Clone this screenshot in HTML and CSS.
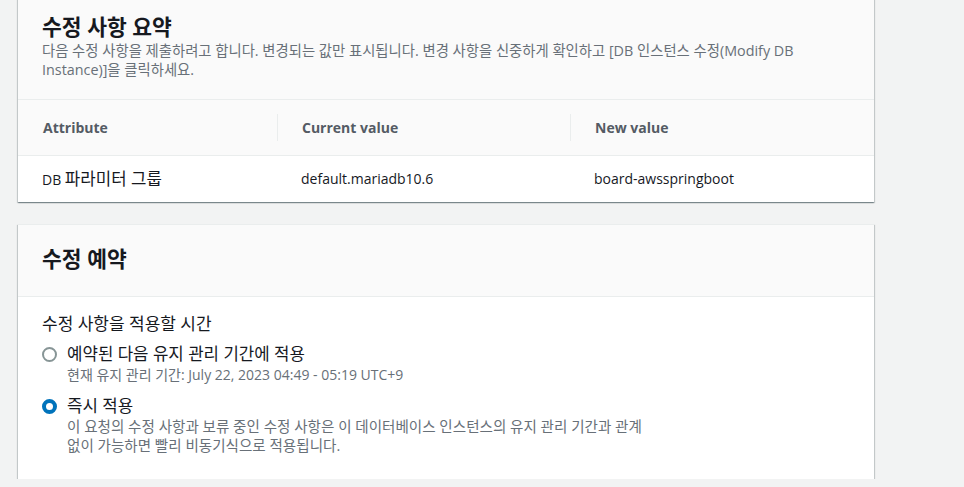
FILE: index.html
```html
<!DOCTYPE html>
<html lang="ko">
<head>
<meta charset="utf-8">
<link rel="stylesheet" href="styles.css">
</head>
<body>
<div class="page">
  <section class="card card-summary">
    <header class="card-header">
      <h2 class="card-title">수정 사항 요약</h2>
      <p class="card-desc">다음 수정 사항을 제출하려고 합니다. 변경되는 값만 표시됩니다. 변경 사항을 신중하게 확인하고 [DB 인스턴스 수정(Modify DB Instance)]을 클릭하세요.</p>
    </header>
    <div class="table">
      <div class="th"><div class="th-inner first">Attribute</div></div>
      <div class="th"><div class="th-inner">Current value</div></div>
      <div class="th"><div class="th-inner">New value</div></div>
      <div class="td">DB <span class="ko">파라미터 그룹</span></div>
      <div class="td">default.mariadb10.6</div>
      <div class="td">board-awsspringboot</div>
    </div>
  </section>

  <section class="card card-schedule">
    <header class="card-header schedule-header">
      <h2 class="card-title">수정 예약</h2>
    </header>
    <div class="card-body">
      <div class="field-label">수정 사항을 적용할 시간</div>
      <div class="radio-group">
        <label class="radio-option">
          <span class="radio"></span>
          <span class="radio-text">
            <span class="radio-label">예약된 다음 유지 관리 기간에 적용</span>
            <span class="radio-desc">현재 유지 관리 기간: July 22, 2023 04:49 - 05:19 UTC+9</span>
          </span>
        </label>
        <label class="radio-option">
          <span class="radio checked"></span>
          <span class="radio-text">
            <span class="radio-label">즉시 적용</span>
            <span class="radio-desc wrap">이 요청의 수정 사항과 보류 중인 수정 사항은 이 데이터베이스 인스턴스의 유지 관리 기간과 관계 없이 가능하면 빨리 비동기식으로 적용됩니다.</span>
          </span>
        </label>
      </div>
    </div>
  </section>
</div>
</body>
</html>
```

FILE: styles.css
```css
html, body {
  margin: 0;
  padding: 0;
  background: #f2f3f3;
}
body {
  font-family: "Open Sans", "Noto Sans CJK KR", sans-serif;
  font-size: 14px;
  color: #16191f;
  overflow: hidden;
}
.page {
  width: 856px;
  padding-left: 18px;
  margin-top: -2px;
}
.card {
  background: #fff;
  border-top: 1px solid #eaeded;
  box-shadow: 0 1px 1px 0 rgba(0, 28, 36, 0.3), 1px 1px 1px 0 rgba(0, 28, 36, 0.15), -1px 1px 1px 0 rgba(0, 28, 36, 0.15);
}
.card-schedule {
  margin-top: 22px;
}
.card-header {
  background: #fafafa;
  padding: 14px 24px 20px;
  border-bottom: 1px solid #eaeded;
}
.card-title {
  margin: 0;
  font-size: 21.5px;
  line-height: 28px;
  font-weight: 700;
  color: #16191f;
}
.card-desc {
  margin: 0;
  font-size: 14.35px;
  line-height: 19px;
  color: #687078;
}
.table {
  display: grid;
  grid-template-columns: 259px 293px 1fr;
}
.th {
  background: #fafafa;
  padding: 14px 0;
  border-bottom: 1px solid #eaeded;
}
.th-inner {
  border-left: 1px solid #eaeded;
  padding: 3px 24px;
  line-height: 21px;
  font-weight: 700;
  color: #545b64;
}
.th-inner.first {
  border-left-color: transparent;
}
.td {
  padding: 12px 24px;
  line-height: 21px;
  color: #16191f;
}
.ko {
  font-size: 16.8px;
}
.schedule-header {
  padding: 20px 24px 23px;
}
.card-body {
  padding: 18px 24px 23px;
}
.field-label {
  font-size: 17px;
  line-height: 22px;
  margin-top: -2px;
  margin-bottom: 2px;
}
.radio-group {
  margin-top: 8px;
  display: flex;
  flex-direction: column;
  gap: 10px;
}
.radio-option {
  display: flex;
  align-items: flex-start;
  gap: 10px;
}
.radio {
  flex: none;
  width: 11px;
  height: 11px;
  margin-top: 4px;
  border: 2px solid #879596;
  border-radius: 50%;
  background: #fff;
}
.radio.checked {
  border: 4px solid #0073bb;
  width: 7px;
  height: 7px;
}
.radio-text {
  display: flex;
  flex-direction: column;
}
.radio-label {
  font-size: 16.8px;
  line-height: 22px;
}
.radio-desc {
  font-size: 14px;
  line-height: 19.5px;
  color: #687078;
}
.radio-desc.wrap {
  font-size: 14.55px;
  max-width: 590px;
}
```
